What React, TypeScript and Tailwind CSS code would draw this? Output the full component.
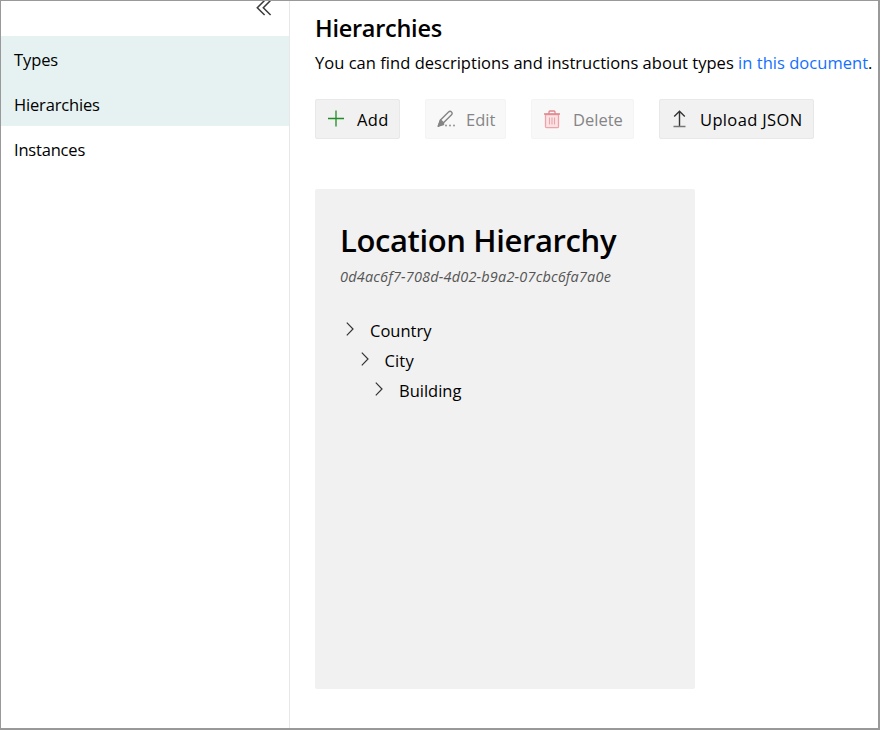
import type { ReactNode } from "react";

const navItems = [
  { label: "Types", active: true, text: "tracking-[-0.1px]" },
  { label: "Hierarchies", active: true, text: "tracking-[-0.17px]" },
  { label: "Instances", active: false, text: "tracking-[-0.19px]" },
];

const levels = [
  { label: "Country", indent: "pl-[31px]", text: "tracking-[0px]" },
  { label: "City", indent: "pl-[45.5px]", text: "tracking-[0.15px]" },
  { label: "Building", indent: "pl-[60px]", text: "tracking-[0px]" },
];

function CollapseIcon() {
  return (
    <svg width="18" height="18" viewBox="0 0 18 18" fill="none" stroke="#3b3b3b" strokeWidth="1.5">
      <path d="M10 1 2.3 8.7l7.300 7.300M16 1 8.300 8.700l7.300 7.300" />
    </svg>
  );
}

function PlusIcon() {
  return (
    <svg width="18" height="18" viewBox="0 0 18 18" fill="none" stroke="#1f8c24" strokeWidth="1.3">
      <path d="M9 .5v16M1 8.500h16" />
    </svg>
  );
}

function EditIcon() {
  return (
    <svg width="20" height="18" viewBox="0 0 20 18" fill="none" stroke="#858585" strokeWidth="1.4" strokeLinejoin="round">
      <path d="M1.300 16.200 3.500 10 11.300 2.200c1.200-1.200 2.300-1.100 3.200-.3s1 2-.2 3.200L6.500 12.800Z" />
      <path d="M1.300 16.200 3.500 10l3 2.800v1.700Z" fill="#858585" />
      <g fill="#949494" stroke="none">
        <circle cx="9" cy="15.400" r="1" />
        <circle cx="13" cy="15.400" r="1" />
        <circle cx="17" cy="15.400" r="1" />
      </g>
    </svg>
  );
}

function TrashIcon() {
  return (
    <svg width="18" height="19" viewBox="0 0 18 19" fill="none" stroke="#eda4a8" strokeWidth="1.3">
      <path d="M2.500 4.500h13V16.500c0 .8-.5 1.200-1.200 1.200H3.700c-.7 0-1.200-.4-1.200-1.200Z" fill="#fae3e4" />
      <path d="M1 4h16" stroke="#df858a" strokeWidth="1.500" />
      <path d="M6 3.800V2c0-.6.400-1 1-1h4c.6 0 1 .4 1 1v1.800" stroke="#df858a" />
      <path d="M6.500 7.500v7M9 7.500v7M11.500 7.500v7" strokeWidth="1.100" />
    </svg>
  );
}

function UploadIcon() {
  return (
    <svg width="14" height="18" viewBox="0 0 14 18" fill="none" stroke="#333" strokeWidth="1.400">
      <path d="M6.500 16V1.500M1.200 6.600 6.500 1.300l5.300 5.300" />
      <path d="M.5 16.500h12" stroke="#777" strokeWidth="1.500" />
    </svg>
  );
}

function Chevron() {
  return (
    <svg className="-mt-[4px]" width="8" height="14" viewBox="0 0 8 14" fill="none" stroke="#333" strokeWidth="1.200">
      <path d="m.8.700 6.200 6.300-6.200 6.300" />
    </svg>
  );
}

function ToolButton({ icon, children, className, disabled }: { icon: ReactNode; children: ReactNode; className: string; disabled?: boolean }) {
  return (
    <button
      disabled={disabled}
      className={`flex h-10 shrink-0 items-center rounded-[2px] border whitespace-nowrap ${
        disabled ? "border-[#f4f4f4] bg-[#f8f8f8] text-[#858585]" : "border-[#e8e8e8] bg-[#f1f1f1] text-black"
      } ${className}`}
    >
      {icon}
      <span className="pt-[2px]">{children}</span>
    </button>
  );
}

export default function App() {
  return (
    <div className="flex h-[730px] w-[880px] overflow-hidden border-t border-r-2 border-b-2 border-l border-[#999] bg-white font-['Open_Sans','Noto_Sans',sans-serif] text-[16.5px] leading-[24px] text-black">
      <aside className="w-[289px] shrink-0 border-r border-[#e8e8e8]">
        <div className="flex h-[35px] justify-end pr-[16px]">
          <div className="-mt-[2px]"><CollapseIcon /></div>
        </div>
        <nav>
          {navItems.map((item) => (
            <div key={item.label} className={`flex h-[45px] items-center pt-[3px] pl-[13px] ${item.active ? "bg-[#e5f2f1]" : ""}`}>
              <span className={item.text}>{item.label}</span>
            </div>
          ))}
        </nav>
      </aside>
      <main className="min-w-0 flex-1 pt-[10px] pl-[25px]">
        <h1 className="h-[34px] text-[23.5px] leading-[34px] font-semibold tracking-[-0.27px] whitespace-nowrap">Hierarchies</h1>
        <p className="mt-[6px] h-[24px] tracking-[0.03px] whitespace-nowrap">You can find descriptions and instructions about types <a className="text-[#136fff]">in this document</a>.</p>
        <div className="mt-[24px] flex gap-[25px]">
          <ToolButton className="w-[85px] gap-[12px] pl-[11px] tracking-[0.4px]" icon={<PlusIcon />}>Add</ToolButton>
          <ToolButton className="w-[81px] gap-[9px] pl-[11px]" icon={<EditIcon />} disabled>Edit</ToolButton>
          <ToolButton className="w-[103px] gap-[12px] pl-[11px]" icon={<TrashIcon />} disabled>Delete</ToolButton>
          <ToolButton className="w-[155px] gap-[13px] pl-[13px] tracking-[0.36px]" icon={<UploadIcon />}>Upload JSON</ToolButton>
        </div>
        <section className="mt-[50px] h-[500px] w-[380px] rounded-[2px] bg-[#f1f1f1] pt-[28px]">
          <h2 className="h-[46px] pl-[25px] text-[31px] leading-[46px] font-semibold tracking-[-0.38px] whitespace-nowrap">Location Hierarchy</h2>
          <div className="mt-[4px] h-[20px] pl-[25px] text-[14.5px] leading-[20px] tracking-[0.18px] whitespace-nowrap text-[#555] italic">0d4ac6f7-708d-4d02-b9a2-07cbc6fa7a0e</div>
          <div className="mt-[29px]">
            {levels.map((level) => (
              <div key={level.label} className={`flex h-[30px] items-center gap-[16px] ${level.indent}`}>
                <Chevron />
                <span className={level.text}>{level.label}</span>
              </div>
            ))}
          </div>
        </section>
      </main>
    </div>
  );
}
